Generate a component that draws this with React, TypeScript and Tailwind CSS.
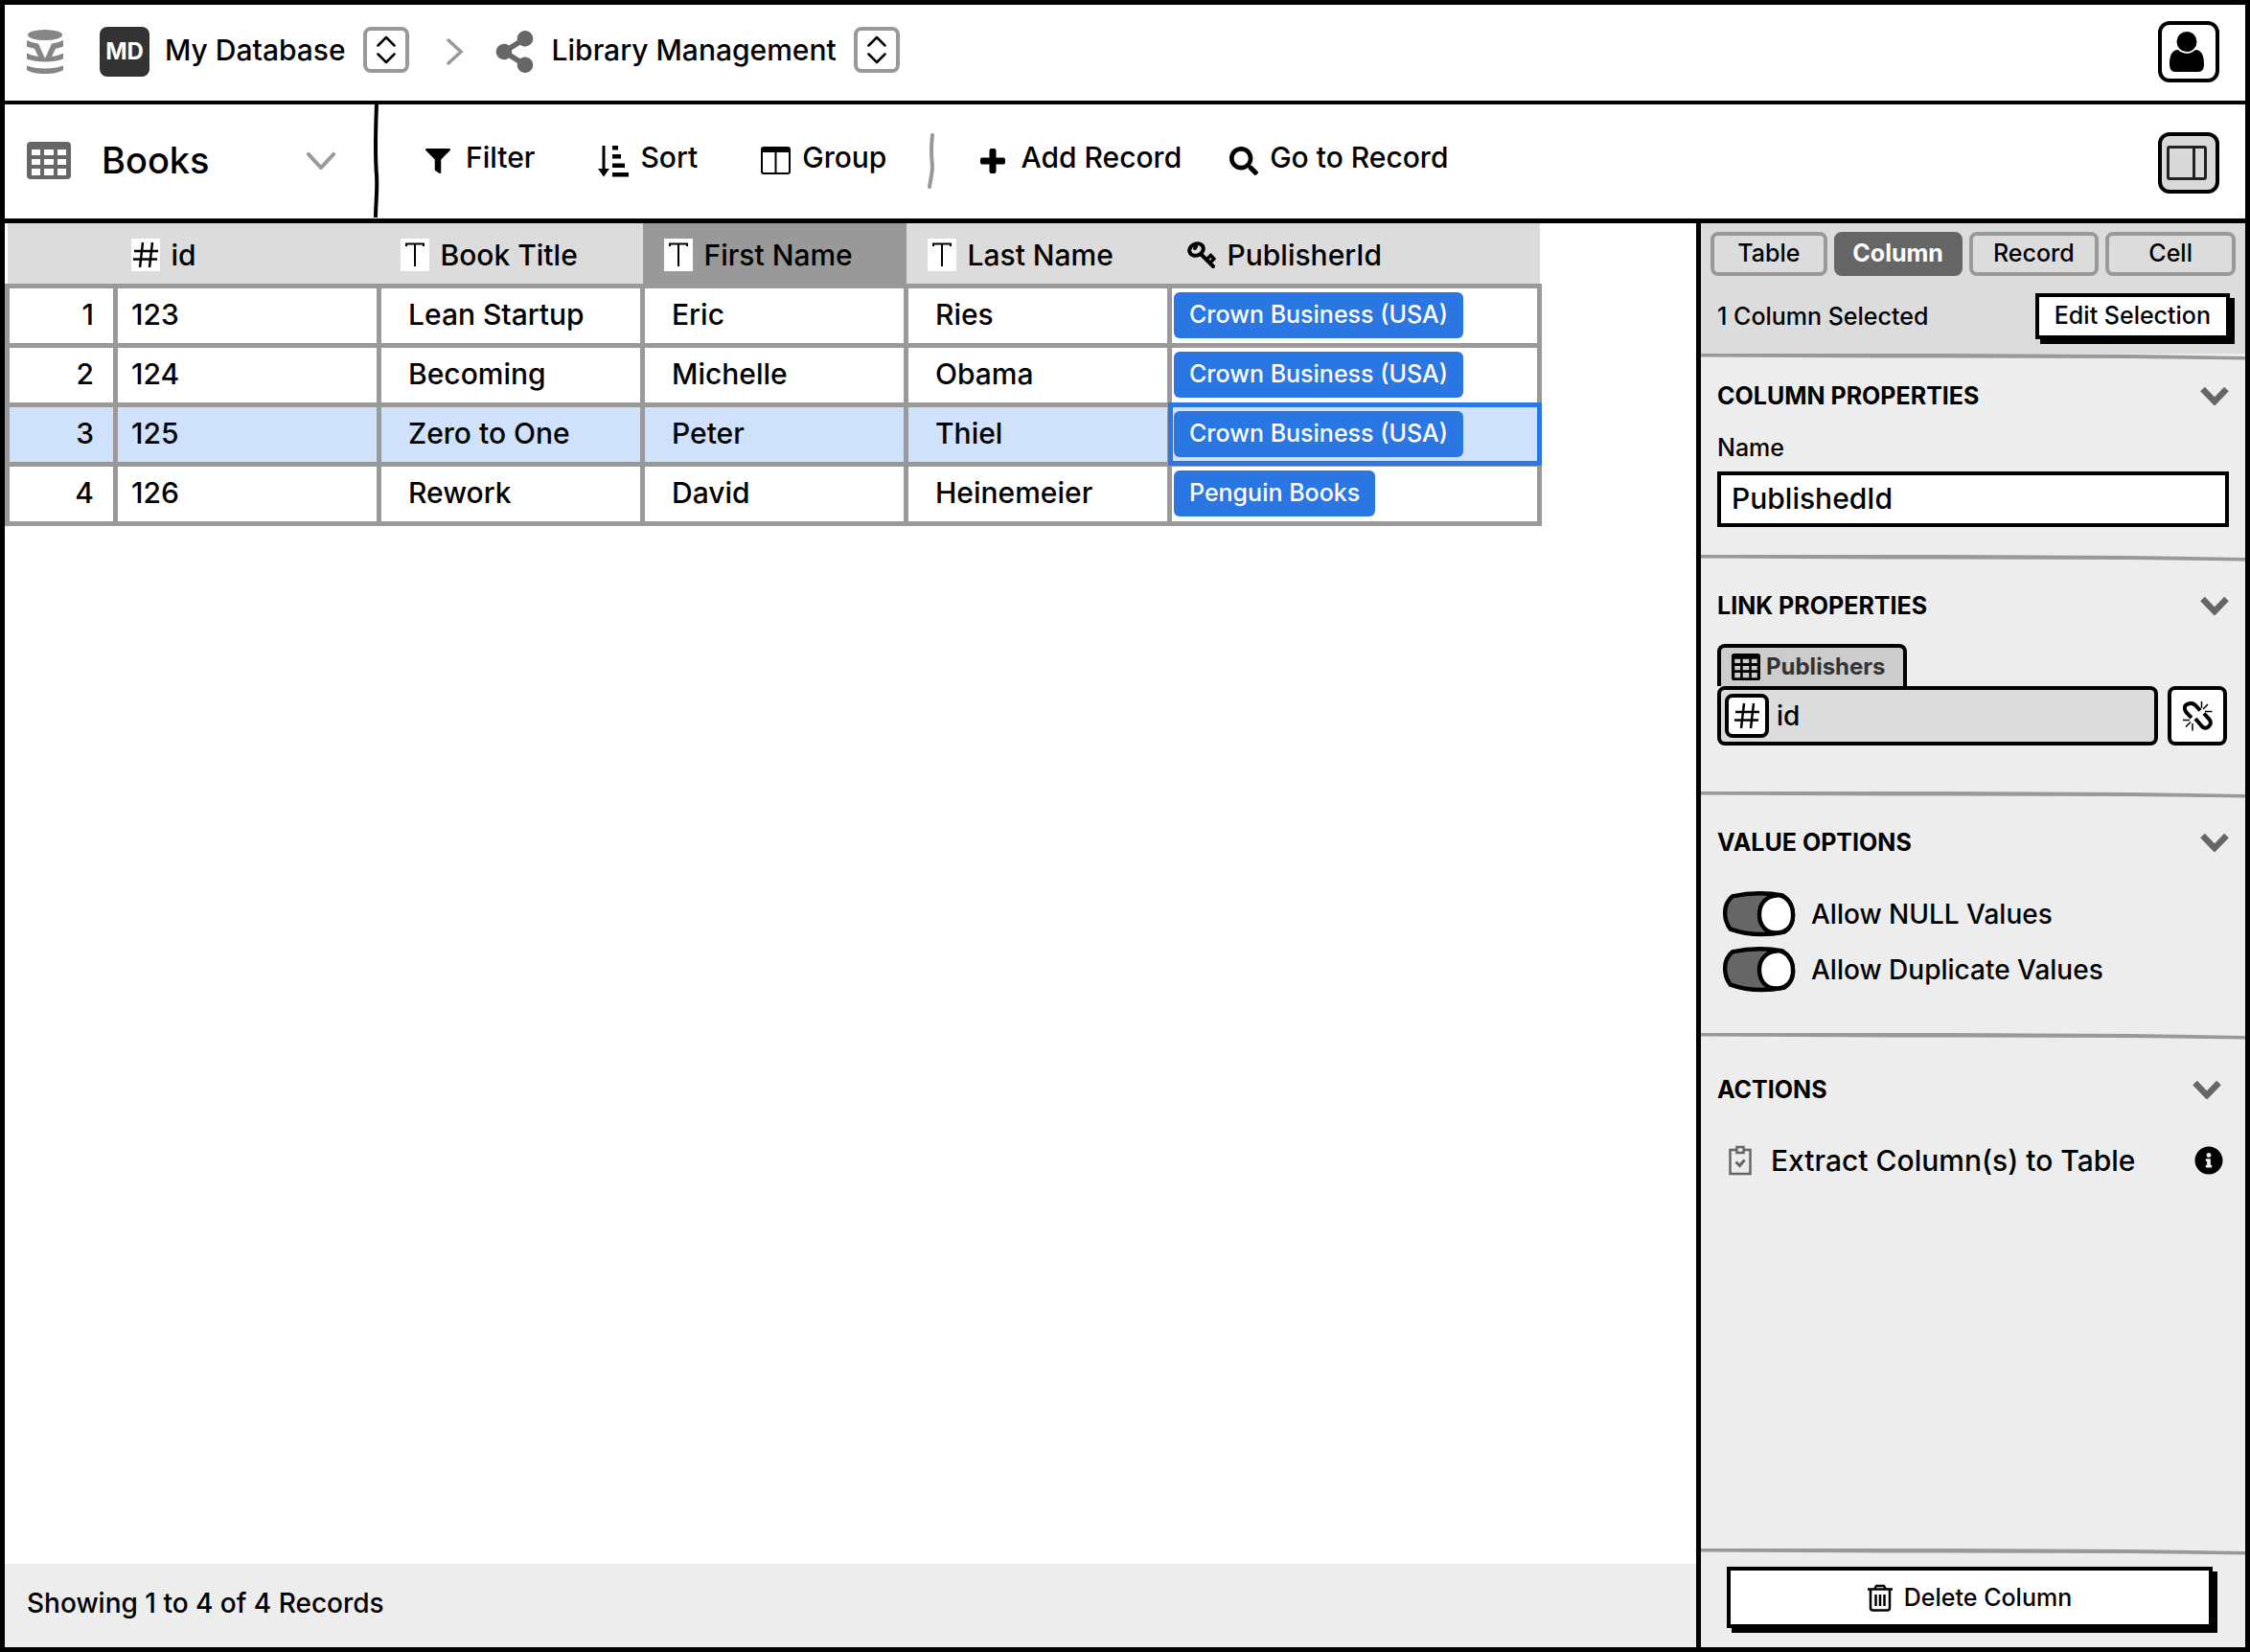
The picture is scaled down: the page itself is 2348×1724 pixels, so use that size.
import { useState } from 'react';
import type { ReactNode } from 'react';
import clsx from 'clsx';
import { FaFilter, FaInfoCircle, FaSearch, FaShareAlt } from 'react-icons/fa';

const books = [
  { id: 123, title: 'Lean Startup', first: 'Eric', last: 'Ries', publisher: 'Crown Business (USA)' },
  { id: 124, title: 'Becoming', first: 'Michelle', last: 'Obama', publisher: 'Crown Business (USA)' },
  { id: 125, title: 'Zero to One', first: 'Peter', last: 'Thiel', publisher: 'Crown Business (USA)' },
  { id: 126, title: 'Rework', first: 'David', last: 'Heinemeier', publisher: 'Penguin Books' },
];

const tabs = ['Table', 'Column', 'Record', 'Cell'];

function LogoIcon() {
  return (
    <svg viewBox="0 0 38 46" className="h-[46px] w-[38px] shrink-0 fill-[#858585]">
      <ellipse cx="19" cy="5.5" rx="18" ry="5.5" />
      <path d="M0 11c4 2 8 3 12 3.500L19 30l7-15.500c4-.5 8-1.500 12-3.500v6.500c-2.500 1-5 1.800-8 2.300L26 28c4-.6 8-1.800 12-3.500v6c-5 2-11 3-19 3s-14-1-19-3v-6c4 1.700 8 2.900 12 3.500l-4-8.200c-3-.5-5.500-1.300-8-2.300z" />
      <path d="M0 37.500c5 2 11 3 19 3s14-1 19-3V42c-4 2.700-11 4-19 4S4 44.700 0 42z" />
    </svg>
  );
}

function GridIcon({ className }: { className?: string }) {
  return (
    <svg viewBox="0 0 46 39" className={className} preserveAspectRatio="none">
      <path
        fill="currentColor"
        fillRule="evenodd"
        d="M4 0h38q4 0 4 4v31q0 4-4 4H4q-4 0-4-4V4q0-4 4-4zM5 8v6h9V8zm13 0v6h10V8zm14 0v6h9V8zM5 18v6h9v-6zm13 0v6h10v-6zm14 0v6h9v-6zM5 28v7h9v-7zm13 0v7h10v-7zm14 0v7h9v-7z"
      />
    </svg>
  );
}

function ChevronsIcon() {
  return (
    <svg viewBox="0 0 20 30" className="h-[30px] w-5 fill-none stroke-black stroke-[2.500]" strokeLinecap="round" strokeLinejoin="round">
      <path d="M1.500 10.500 10 2l8.500 8.500M1.500 19.500 10 28l8.500-8.500" />
    </svg>
  );
}

function SortIcon() {
  return (
    <svg viewBox="0 0 32 34" className="h-[34px] w-8 shrink-0">
      <path d="M4.500 1h3v24H12l-6 8.500L0 25h4.500zM15 1h6v4.500h-6zM15 10h9v4.500h-9zM15 19.500h13V24H15zM15 29h17v4.500H15z" />
    </svg>
  );
}

function GroupIcon() {
  return (
    <svg viewBox="0 0 31 29" className="h-[29px] w-[31px] shrink-0">
      <rect x="1" y="1" width="29" height="27" rx="2" fill="none" stroke="black" strokeWidth="2" />
      <path d="M1 1h29v5H1zM14.500 5h2v23h-2z" />
    </svg>
  );
}

function PlusIcon() {
  return (
    <svg viewBox="0 0 26 26" className="h-[26px] w-[26px] shrink-0">
      <rect x="9.500" y="0" width="7" height="26" rx="2" />
      <rect x="0" y="9.500" width="26" height="7" rx="2" />
    </svg>
  );
}

function KeyIcon() {
  return (
    <svg viewBox="0 0 30 30" className="h-[30px] w-[30px] shrink-0 fill-none stroke-black" strokeLinecap="round">
      <ellipse cx="9.500" cy="9.500" rx="7.500" ry="6" strokeWidth="4" transform="rotate(-25 9.500 9.500)" />
      <path strokeWidth="4" d="M9 6.500 8 8M15 15l12 12" />
      <path strokeWidth="3.500" d="m21 19 3.500-3.500 2 2M25 22l3-3" />
    </svg>
  );
}

function UnlinkIcon() {
  return (
    <svg viewBox="0 0 31 31" className="h-[31px] w-[31px] fill-none stroke-black">
      <path strokeWidth="4" d="M9 17 4 12C0 7 2 3 6 2.500c3-1.500 5-.5 7 1.500l5 5.500M13 18l6 7c3 4 6 3 8 1 3-2 2-6 0-8l-5-5.500" />
      <path strokeWidth="1.500" d="M19.500 0v7M26 3l-5 5M30.500 10.500H23M0 19.500h7M3 26.500l5-5M10 23v7.500" />
    </svg>
  );
}

function HashIcon() {
  return (
    <svg viewBox="0 0 28 28" className="h-7 w-7 fill-none stroke-black stroke-[2.500]">
      <path d="M11 1 8 27M21 1l-3 26M2 10h25M1 18.500h25" />
    </svg>
  );
}

function TextIcon() {
  return (
    <svg viewBox="0 0 22 26" className="h-[26px] w-[22px] fill-none stroke-black stroke-2">
      <path d="M2 4V1.500h18V4M11 1.500V25" />
    </svg>
  );
}

function TrashIcon() {
  return (
    <svg viewBox="0 0 26 29" className="h-[29px] w-[26px] shrink-0 fill-none stroke-black stroke-[2.500]" strokeLinejoin="round">
      <path d="M0 5.500h26M7 5.500 9 2h8l2 3.500M3 6v19q0 2.500 2.500 2.500h15q2.500 0 2.500-2.500V6M8.500 11v12M13 11v12M17.500 11v12" />
    </svg>
  );
}

function ClipboardIcon() {
  return (
    <svg viewBox="0 0 24 32" className="h-8 w-6 shrink-0 fill-none stroke-[#666]">
      <path strokeWidth="2.500" d="M8 5H1.500v25h21V5H16" />
      <path strokeWidth="2.500" d="M8.500 2h7v6h-7z" />
      <path strokeWidth="3" d="m7.500 17.500 4 4 5-6" />
    </svg>
  );
}

function SectionChevron() {
  return (
    <svg viewBox="0 0 30 20" className="h-5 w-[30px] fill-none stroke-[#666] stroke-[6.500]">
      <path d="m2.500 3 12.500 13L27.500 3" />
    </svg>
  );
}

// Hand-drawn rule between the panel sections
function Rule() {
  return (
    <svg viewBox="0 0 570 7" preserveAspectRatio="none" className="block h-[7px] w-full shrink-0 fill-[#999]">
      <path d="M0 0h250l200 1 120 2v3.500l-120-1.500-250-.5L0 3.500z" />
    </svg>
  );
}

function Section({ title, inset, className, children }: { title: string; inset?: boolean; className: string; children: ReactNode }) {
  return (
    <section className={clsx('shrink-0 px-[17px]', className)}>
      <div className={clsx('flex h-8 items-center justify-between', inset && 'pr-2')}>
        <h2 className="text-[25px] font-bold">{title}</h2>
        <button aria-label={`Collapse ${title}`}>
          <SectionChevron />
        </button>
      </div>
      {children}
    </section>
  );
}

function Toggle({ label }: { label: string }) {
  return (
    <label className="flex h-[58px] items-center gap-4 text-[28px]">
      <input type="checkbox" defaultChecked className="peer sr-only" />
      <svg viewBox="0 0 80 48" className="h-12 w-[78px] shrink-0 -scale-x-100 stroke-black stroke-[4.500] peer-checked:scale-x-100">
        <path fill="#666" d="M12 5C30 1 50 1 66 4c8 5 11 12 11 21 0 8-3 14-9 18-20 4-41 3-58-3C3 31 1 14 12 5z" />
        <path fill="white" d="M59 4c8-1 18 6 18 21 0 12-7 19-18 19S41 36 41 24 49 5 59 4z" />
      </svg>
      <span>{label}</span>
    </label>
  );
}

function TypeBadge({ children }: { children: ReactNode }) {
  return <span className="flex h-[34px] w-[30px] items-center justify-center bg-white">{children}</span>;
}

function HeaderCell({ icon, label, className }: { icon: ReactNode; label: string; className?: string }) {
  return (
    <th className={clsx('pt-1 pr-0 pb-0 text-left font-medium', className)}>
      <span className="flex items-center gap-3">
        {icon}
        {label}
      </span>
    </th>
  );
}

function ToolButton({ icon, label, className }: { icon: ReactNode; label: string; className?: string }) {
  return (
    <button className={clsx('flex items-center', className)}>
      {icon}
      <span className="pb-2">{label}</span>
    </button>
  );
}

const cell = 'border-[5px] border-[#999] pt-0 pb-0.5';

export default function App() {
  const [tab, setTab] = useState('Column');
  const [selected, setSelected] = useState(125);

  return (
    <div className="flex h-screen flex-col border-[5px] border-black bg-white font-['Inter',sans-serif] text-[30px] leading-9 font-medium text-black">
      <header className="flex h-[104px] shrink-0 items-center border-b-4 border-black pr-[27px] pb-0.5 pl-[23px]">
        <LogoIcon />
        <span className="ml-[38px] flex h-[52px] w-[52px] items-center justify-center rounded-lg bg-[#333] text-2xl font-bold text-white">MD</span>
        <span className="ml-4 pb-1">My Database</span>
        <button aria-label="Switch database" className="mb-1 ml-[18px] flex h-12 w-12 items-center justify-center rounded-lg border-4 border-[#999]">
          <ChevronsIcon />
        </button>
        <svg viewBox="0 0 18 28" className="ml-[39px] h-7 w-[18px] fill-none stroke-[#999] stroke-[3.500]" strokeLinecap="round">
          <path d="m2 2 13 12L2 26" />
        </svg>
        <FaShareAlt className="ml-8 h-[44px] w-[42px] text-[#666]" />
        <span className="ml-[18px] pb-1">Library Management</span>
        <button aria-label="Switch schema" className="mb-1 ml-[18px] flex h-12 w-12 items-center justify-center rounded-lg border-4 border-[#999]">
          <ChevronsIcon />
        </button>
        <button aria-label="Account" className="ml-auto flex h-16 w-16 items-center justify-center rounded-xl border-4 border-black">
          <svg viewBox="0 0 36 42" className="mr-1 h-[42px] w-9">
            <circle cx="18" cy="10.500" r="10.500" />
            <path d="M9 19c5 5 13 5 18 0 7 0 9 7 9 15 0 5-2 8-6 8H6c-4 0-6-3-6-8 0-8 2-15 9-15z" />
          </svg>
        </button>
      </header>

      <div className="flex h-[124px] shrink-0 items-center border-b-[5px] border-black pr-[27px] pb-0.5 pl-[23px]">
        <GridIcon className="h-[39px] w-[46px] shrink-0 text-[#666]" />
        <div className="ml-8 grid w-[248px] items-center">
          <select aria-label="Table" className="col-start-1 row-start-1 appearance-none bg-transparent pb-0.5 text-[38px] leading-[44px] font-medium">
            <option>Books</option>
          </select>
          <svg viewBox="0 0 30 18" className="pointer-events-none col-start-1 row-start-1 mr-1 h-[18px] w-[30px] justify-self-end fill-none stroke-[#999] stroke-[4]" strokeLinecap="round">
            <path d="m2 2 13 14L28 2" />
          </svg>
        </div>
        <svg viewBox="0 0 8 119" className="ml-[34px] h-[119px] w-2 fill-none stroke-black stroke-[4]">
          <path d="M5 0C4 30 3 50 5 75c1 16-1 30-1 44" />
        </svg>
        <ToolButton className="ml-12 gap-4" icon={<FaFilter className="h-7 w-[26px]" />} label="Filter" />
        <ToolButton className="ml-[66px] gap-3" icon={<SortIcon />} label="Sort" />
        <ToolButton className="ml-[66px] gap-3" icon={<GroupIcon />} label="Group" />
        <svg viewBox="0 0 8 58" className="ml-[42px] h-[58px] w-2 fill-none stroke-[#999] stroke-[4]" strokeLinecap="round">
          <path d="M6 2c-2 16-1 24 0 32 0 8-2 14-3 22" />
        </svg>
        <ToolButton className="ml-12 gap-4" icon={<PlusIcon />} label="Add Record" />
        <ToolButton className="ml-[50px] gap-3" icon={<FaSearch className="h-[30px] w-[30px]" />} label="Go to Record" />
        <button aria-label="Toggle panel" className="mt-1 ml-auto flex h-16 w-16 items-center justify-center rounded-xl border-4 border-black bg-[#d9d9d9]">
          <svg viewBox="0 0 42 36" className="mr-1 h-9 w-[42px] fill-none stroke-[#222] stroke-[3]">
            <rect x="1.500" y="1.500" width="39" height="33" rx="1.500" />
            <path d="M28.500 1.500v33" />
          </svg>
        </button>
      </div>

      <div className="flex min-h-0 flex-1">
        <main className="flex min-w-0 flex-1 flex-col">
          <div className="min-h-0 flex-1 overflow-hidden">
            <table className="w-[1604px] table-fixed border-collapse">
              <colgroup>
                <col className="w-[113px]" />
                <col className="w-[275px]" />
                <col className="w-[275px]" />
                <col className="w-[275px]" />
                <col className="w-[275px]" />
                <col />
              </colgroup>
              <thead>
                <tr className="h-[65px] bg-[#dcdcdc]">
                  <th aria-label="Row" />
                  <HeaderCell className="pl-4" icon={<TypeBadge><HashIcon /></TypeBadge>} label="id" />
                  <HeaderCell className="pl-[22px]" icon={<TypeBadge><TextIcon /></TypeBadge>} label="Book Title" />
                  <HeaderCell className="bg-[#999] pl-[22px]" icon={<TypeBadge><TextIcon /></TypeBadge>} label="First Name" />
                  <HeaderCell className="pl-[22px]" icon={<TypeBadge><TextIcon /></TypeBadge>} label="Last Name" />
                  <HeaderCell className="pl-[18px]" icon={<KeyIcon />} label="PublisherId" />
                </tr>
              </thead>
              <tbody>
                {books.map((book, i) => {
                  const active = book.id === selected;
                  return (
                    <tr key={book.id} onClick={() => setSelected(book.id)} className={clsx('h-[62px]', active && 'bg-[#cfe1fb]')}>
                      <td className={clsx(cell, 'pr-5 text-right')}>{i + 1}</td>
                      <td className={clsx(cell, 'pl-[14px]')}>{book.id}</td>
                      <td className={clsx(cell, 'pl-7')}>{book.title}</td>
                      <td className={clsx(cell, 'pl-7')}>{book.first}</td>
                      <td className={clsx(cell, 'pl-7')}>{book.last}</td>
                      <td
                        className={clsx(
                          'border-[5px] border-[#999] p-0 pl-0.5',
                          active && 'outline-[5px] outline-offset-[-3px] outline-[#2a77e3]'
                        )}
                      >
                        <span className="flex h-12 w-fit items-center rounded-md bg-[#2a77e3] px-4 pb-0.5 text-[25px] text-white">
                          {book.publisher}
                        </span>
                      </td>
                    </tr>
                  );
                })}
              </tbody>
            </table>
          </div>
          <footer className="flex h-[87px] shrink-0 items-center bg-[#ededed] pb-[6px] pl-[23px] text-[28px]">Showing 1 to 4 of 4 Records</footer>
        </main>

        <aside className="flex w-[573px] shrink-0 flex-col border-l-[5px] border-black bg-[#ededed]">
          <div className="flex h-[136px] shrink-0 flex-col bg-[#dcdcdc] px-[10px] pt-[9px]">
            <div role="tablist" className="grid grid-cols-[122fr_134fr_136fr_136fr] gap-[7px]">
              {tabs.map((name) => (
                <button
                  key={name}
                  role="tab"
                  aria-selected={tab === name}
                  onClick={() => setTab(name)}
                  className={clsx(
                    'h-[46px] rounded-lg border-4 pb-1 text-[25px]',
                    tab === name ? 'border-[#666] bg-[#666] font-bold text-white' : 'border-[#999] font-medium'
                  )}
                >
                  {name}
                </button>
              ))}
            </div>
            <div className="mt-[18px] flex items-center justify-between pr-[6px] pl-[7px]">
              <span className="text-[25px]">1 Column Selected</span>
              <button className="h-12 border-4 border-black bg-white px-4 pb-0.5 text-[25px] shadow-[5px_5px_0_black]">Edit Selection</button>
            </div>
          </div>
          <Rule />

          <Section title="COLUMN PROPERTIES" className="h-[203px] pt-[21px]">
            <label htmlFor="column-name" className="mt-[22px] block text-[25px] leading-8">
              Name
            </label>
            <input
              id="column-name"
              defaultValue="PublishedId"
              className="mt-[9px] h-[58px] w-full border-4 border-black bg-white px-[11px] pb-0.5 outline-none"
            />
          </Section>
          <Rule />

          <Section title="LINK PROPERTIES" className="h-[240px] pt-[30px]">
            <div className="mt-6 flex">
              <span className="flex h-[44px] w-[198px] items-center gap-[6px] rounded-t-lg border-4 border-b-0 border-black bg-[#ccc] pl-[11px] text-2xl font-bold text-[#333]">
                <GridIcon className="h-7 w-[30px] text-black" />
                Publishers
              </span>
            </div>
            <div className="flex gap-[10px] pr-0.5">
              <div className="flex h-[62px] flex-1 items-center gap-2 rounded-lg border-4 border-black bg-[#dcdcdc] pl-1">
                <span className="flex h-[46px] w-[46px] items-center justify-center rounded-lg border-4 border-black bg-white">
                  <HashIcon />
                </span>
                <span className="text-[28px]">id</span>
              </div>
              <button aria-label="Unlink" className="flex h-[62px] w-[62px] items-center justify-center rounded-lg border-4 border-black bg-white">
                <UnlinkIcon />
              </button>
            </div>
          </Section>
          <Rule />

          <Section title="VALUE OPTIONS" className="h-[245px] pt-[30px]">
            <div className="mt-[30px] pl-1">
              <Toggle label="Allow NULL Values" />
              <Toggle label="Allow Duplicate Values" />
            </div>
          </Section>
          <Rule />

          <Section title="ACTIONS" inset className="pt-9">
            <div className="mt-10 flex items-center pr-[6px] pl-3">
              <button className="flex items-center gap-5">
                <ClipboardIcon />
                Extract Column(s) to Table
              </button>
              <button aria-label="About extracting columns" className="ml-auto">
                <FaInfoCircle className="h-[30px] w-[30px]" />
              </button>
            </div>
          </Section>

          <div className="mt-auto">
            <Rule />
            <div className="h-[96px] pt-3 pr-[34px] pl-[27px]">
              <button className="flex h-16 w-full items-center justify-center gap-3 border-4 border-black bg-white text-[25px] shadow-[5px_5px_0_black]">
                <TrashIcon />
                Delete Column
              </button>
            </div>
          </div>
        </aside>
      </div>
    </div>
  );
}
